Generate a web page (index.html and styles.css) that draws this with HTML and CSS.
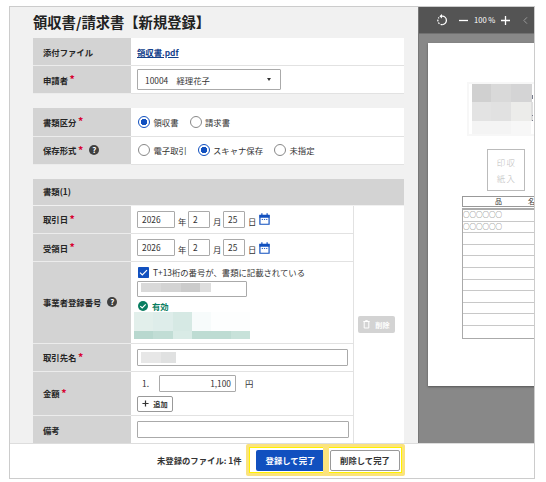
FILE: index.html
```html
<!DOCTYPE html>
<html lang="ja">
<head>
<meta charset="utf-8">
<title>領収書/請求書【新規登録】</title>
<link rel="stylesheet" href="styles.css">
</head>
<body>
<div class="window">
  <div class="main">
    <div class="form">
      <h1>領収書/請求書【新規登録】</h1>
      <section class="card">
        <div class="row"><div class="label">添付ファイル</div><div class="field"><a class="link">領収書.pdf</a></div></div>
        <div class="row"><div class="label">申請者<i>*</i></div><div class="field"><div class="select"><span>10004　経理花子</span><b class="caret"></b></div></div></div>
      </section>
      <section class="card second">
        <div class="row"><div class="label">書類区分<i>*</i></div><div class="field radios"><span class="radio on"></span><span class="opt kind">領収書</span><span class="radio"></span><span class="opt">請求書</span></div></div>
        <div class="row"><div class="label">保存形式<i>*</i><span class="help">?</span></div><div class="field radios"><span class="radio"></span><span class="opt save">電子取引</span><span class="radio on"></span><span class="opt scan">スキャナ保存</span><span class="radio"></span><span class="opt">未指定</span></div></div>
      </section>
      <section class="docs">
        <div class="head">書類(1)</div>
        <div class="docbody">
          <div class="rows">
            <div class="row"><div class="label">取引日<i>*</i></div><div class="field date"><span class="box year">2026</span><em>年</em><span class="box num">2</span><em>月</em><span class="box num">25</span><em>日</em><svg class="cal" viewBox="0 0 12 13"><path d="M1 2.5h10v9.7H1z" fill="none" stroke="#1150bf" stroke-width="1.3"/><path d="M.5 2h11v3H.5zM2.5.3h1.3V3H2.5zM8.2.3h1.3V3H8.2z" fill="#1150bf"/><path d="M3 7h1.3M5.4 7h1.3M7.8 7h1.3" stroke="#1150bf"/></svg></div></div>
            <div class="row"><div class="label">受領日<i>*</i></div><div class="field date"><span class="box year">2026</span><em>年</em><span class="box num">2</span><em>月</em><span class="box num">25</span><em>日</em><svg class="cal" viewBox="0 0 12 13"><path d="M1 2.5h10v9.7H1z" fill="none" stroke="#1150bf" stroke-width="1.3"/><path d="M.5 2h11v3H.5zM2.5.3h1.3V3H2.5zM8.2.3h1.3V3H8.2z" fill="#1150bf"/><path d="M3 7h1.3M5.4 7h1.3M7.8 7h1.3" stroke="#1150bf"/></svg></div></div>
            <div class="row reg"><div class="label">事業者登録番号<span class="help">?</span></div><div class="field stack">
              <div class="check"><svg viewBox="0 0 11 11"><rect width="11" height="11" rx=".8" fill="#1150bf"/><path d="M2 5.6l2.3 2.3L9 3.2" fill="none" stroke="#fff" stroke-width="1.2"/></svg>T+13桁の番号が、書類に記載されている</div>
              <div class="box regno"><svg class="mask" viewBox="0 0 70 9"><path fill="#d9d9d9" d="M0 0h70v9H0z"/><path fill="#d3d3d3" d="M20 0h20v9H20z"/><path fill="#cbcbcb" d="M40 0h19v9H40z"/><path fill="#dedede" d="M59 0h11v9H59z"/></svg></div>
              <div class="valid"><svg viewBox="0 0 10 10"><circle cx="5" cy="5" r="5" fill="#087d60"/><path d="M2.3 5.1l1.9 1.9 3.5-3.6" fill="none" stroke="#fff" stroke-width="1.2"/></svg>有効</div>
              <svg class="mosaic" viewBox="0 0 116 27"><path fill="#e2efeb" d="M0 0h19v19H0z"/><path fill="#deedea" d="M19 0h20v19H19z"/><path fill="#d6e9e4" d="M39 0h19v19H39z"/><path fill="#f7fbfb" d="M58 0h19v19H58z"/><path fill="#fdfefe" d="M77 0h39v19H77z"/><path fill="#b8d8cf" d="M0 19h19v8H0z"/><path fill="#c1ddd5" d="M19 19h20v8H19z"/><path fill="#d9ebe6" d="M39 19h19v8H39z"/><path fill="#bedcd3" d="M58 19h39v8H58z"/><path fill="#c8e2da" d="M97 19h19v8H97z"/></svg>
            </div></div>
            <div class="row"><div class="label">取引先名<i>*</i></div><div class="field"><div class="box partner"><svg class="mask" viewBox="0 0 35 11"><path fill="#e7e7e7" d="M0 0h20v11H0z"/><path fill="#e0e1e1" d="M20 0h15v11H20z"/></svg></div></div></div>
            <div class="row money"><div class="label">金額<i>*</i></div><div class="field stack"><div class="amount"><span class="no">1.</span><span class="box value">1,100</span><span>円</span></div><div class="add"><svg viewBox="0 0 8 8"><path d="M4 .5v7M.5 4h7" stroke="#333" stroke-width="1.4"/></svg>追加</div></div></div>
            <div class="row last"><div class="label">備考</div><div class="field"><div class="box note"></div></div></div>
          </div>
          <div class="actions"><div class="delete"><svg viewBox="0 0 7 9"><path d="M1.2 2v6h4.6V2M.3 1.5h6.4M2.3.6h2.4" fill="none" stroke="#fff"/></svg>削除</div></div>
        </div>
      </section>
    </div>
    <div class="viewer">
      <div class="toolbar">
        <svg class="rotate" viewBox="0 0 12 12"><g fill="none" stroke="#fff" stroke-width="1.3"><path d="M5 2.2h1.2a4.2 4.2 0 0 1 0 8.4"/><path d="M6.2 10.6A4.2 4.2 0 0 1 3 3.5" stroke-dasharray="1.6 1.3"/></g><path d="M6 .0v4.6L3.4 2.3z" fill="#fff"/></svg>
        <svg class="minus" viewBox="0 0 9 9"><path d="M0 4.5h9" stroke="#fff" stroke-width="1.3"/></svg>
        <span class="zoom">100 %</span>
        <svg class="plus" viewBox="0 0 9 9"><path d="M0 4.5h9M4.5 0v9" stroke="#fff" stroke-width="1.3"/></svg>
        <svg class="prev" viewBox="0 0 5 7"><path d="M4 .3L.9 3.5 4 6.7" fill="none" stroke="#999"/></svg>
      </div>
      <div class="paper">
        <svg class="hidden-info" viewBox="0 0 67 54"><path fill="#f7f7f7" d="M0 0h67v54H0z"/><path fill="#fff" d="M2 2h65v50H2z"/><path fill="#d0d0d0" d="M5 2h19v18H5z"/><path fill="#d9d9d9" d="M24 2h20v18H24z"/><path fill="#d4d4d5" d="M44 2h21v18H44z"/><path fill="#e3e3e3" d="M5 20h19v19H5z"/><path fill="#e1e1e1" d="M24 20h20v19H24z"/><path fill="#ececea" d="M44 20h20v19H44z"/><path fill="#dedede" d="M64 20h2v19h-2z"/><path fill="#f4f4f4" d="M5 39h39v13H5z"/><path fill="#f7f7f7" d="M44 39h20v13H44z"/><path fill="#777b8b" d="M65 13h1v4h-1zM65 33h1v1h-1zM65 38h1v1h-1z"/></svg>
        <div class="stamp"><span>印収</span><span>紙入</span></div>
        <div class="thead"><span>品</span><span>名</span></div>
        <div class="tbody"><div>○○○○○○</div><div>○○○○○○</div><div></div><div></div><div></div><div></div><div></div><div></div><div></div><div></div><div></div></div>
      </div>
    </div>
  </div>
  <footer>
    <span class="count">未登録のファイル: 1件</span>
    <div class="marked"><div class="mark first"><div class="submit">登録して完了</div></div><div class="mark"><div class="remove">削除して完了</div></div></div>
  </footer>
</div>
</body>
</html>
```

FILE: styles.css
```css
* { box-sizing: border-box; }
body { margin: 0; width: 546px; height: 482px; padding: 6px 0 0 9px; background: #fff; color: #333; font: 8.35px/12px "Noto Sans CJK JP", "Noto Sans", sans-serif; white-space: nowrap; overflow: hidden; }
svg { display: block; flex: none; }
.window { width: 526px; height: 473px; border: 1px solid #ccc; display: flex; flex-direction: column; }
.main { height: 436px; display: flex; }
.form { width: 408px; padding: 0 0 0 23px; background: #f1f1f1; }
h1 { margin: 0; height: 31px; font-size: 14.3px; line-height: 30px; font-weight: 700; color: #222; }
.card, .docs { width: 371px; }
.second { margin: 14px 0; }
.row { height: 28.2px; display: flex; border-bottom: 1px solid #e2e2e2; background: #fff; }
.label { width: 98px; margin-right: 1px; padding-left: 10px; background: #d3d3d3; box-shadow: 0 1px #ececec; display: flex; align-items: center; font-weight: 700; color: #252525; }
.label i { font-style: normal; color: #d8002f; margin: -1px 0 0 1.5px; font-size: 10.5px; }
.help { width: 10px; height: 10px; margin-left: 6px; border-radius: 50%; background: #404040; color: #fff; font-size: 8px; line-height: 10px; text-align: center; }
.field { flex: 1; padding-left: 5px; display: flex; align-items: center; }
.link { color: #14418b; font-weight: 700; text-decoration: underline; }
.select { width: 144px; height: 21px; border: 1px solid #aaa; border-radius: 1px; padding: 0 9px 0 7px; display: flex; align-items: center; justify-content: space-between; }
.caret { border: 2.5px solid transparent; border-top: 3px solid #333; border-bottom: 0; }
.radios { padding-left: 6px; }
.radio { width: 12px; height: 12px; border: 1px solid #888; border-radius: 50%; flex: none; }
.radio.on { border: 1.3px solid #1150bf; background: radial-gradient(circle, #1150bf 2.9px, #fff 3.5px); }
.opt { margin-left: 3.5px; }
.kind { width: 36px; }
.save { width: 44px; }
.scan { width: 61px; }
.head { height: 26px; margin-bottom: 1px; padding-left: 10px; line-height: 25px; font-weight: 700; background: #d3d3d3; color: #252525; }
.docbody { display: flex; background: #fff; }
.rows { width: 320px; }
.actions { flex: 1; border-left: 1px solid #e2e2e2; display: flex; align-items: center; padding-left: 4px; }
.delete { width: 37px; height: 17px; border-radius: 2px; background: #d3d3d3; color: #fff; display: flex; align-items: center; justify-content: center; font-size: 7.2px; font-weight: 700; gap: 5px; }
.delete svg { width: 7px; height: 9px; }
.box { height: 17px; border: 1px solid #aaa; border-radius: 1px; background: #fff; display: flex; align-items: center; padding: 0 4px; }
.date .box { padding-bottom: 1px; }
.year { width: 38px; }
.num { width: 22px; }
.date em { font-style: normal; width: 8px; margin: 3px 2px 0 3px; }
.cal { width: 11px; height: 12px; margin-left: 1px; }
.reg { height: 81.6px; }
.stack { display: block; }
.check { display: flex; align-items: center; gap: 4px; height: 12px; margin: 4px 0 3px 1px; }
.check svg { width: 11px; height: 11px; }
.regno { width: 110px; height: 16px; padding: 0 0 3px 3px; }
.regno .mask { width: 70px; height: 9px; }
.valid { display: flex; align-items: center; gap: 4px; height: 12px; margin: 2.5px 0 0 1px; font-weight: 700; color: #087d60; }
.valid svg { width: 10px; height: 10px; }
.mosaic { width: 116px; height: 27px; margin-left: -3px; }
.partner { width: 211px; padding-left: 3px; }
.partner .mask { width: 35px; height: 11px; }
.money { height: 44px; }
.amount { display: flex; align-items: center; margin: 3px 0 4px; }
.no { width: 22px; padding-left: 5px; }
.value { width: 77px; margin-right: 9px; justify-content: flex-end; }
.add { width: 36px; height: 16px; border: 1px solid #999; border-radius: 2px; display: flex; align-items: center; justify-content: center; gap: 4px; font-size: 7.2px; font-weight: 700; }
.add svg { width: 7px; height: 7px; }
.last { height: 27.8px; border-bottom: 0; }
.note { width: 212px; }
.viewer { flex: 1; min-width: 0; background: #888; overflow: hidden; border-left: 1px solid #777; }
.toolbar { height: 27px; background: #545454; border-bottom: 1px solid #707070; color: #fff; display: flex; align-items: center; }
.rotate { width: 12px; height: 12px; margin-left: 17px; }
.minus { width: 9px; height: 9px; margin-left: 11px; }
.zoom { width: 21px; margin: 0 6px; font-size: 7.6px; }
.plus { width: 9px; height: 9px; }
.prev { width: 5px; height: 7px; margin-left: 13px; }
.paper { width: 110px; height: 343px; margin: 9px 0 0 9px; padding: 39px 0 0 34px; background: #fff; box-shadow: 0 1px 2px #555; }
.hidden-info { width: 67px; height: 54px; margin-left: 5px; }
.stamp { width: 38px; height: 42px; margin: 13px 0 5px 25px; border: 1.5px solid #bbb; display: flex; flex-direction: column; align-items: center; gap: 4px; padding: 6px 0 0 1px; color: #bbb; font: 300 8.5px/12px "Noto Sans CJK JP", sans-serif; letter-spacing: 1.2px; }
.thead { width: 80px; height: 11px; border: 1px solid #999; padding-left: 32px; font-size: 7px; line-height: 8px; display: flex; gap: 26px; }
.tbody { width: 80px; margin-top: 1px; border: 1px solid #aaa; border-top-width: 2px; }
.tbody div { height: 11.6px; border-bottom: 1px solid #c8c8c8; font-size: 6.5px; line-height: 9px; color: #555; }
.tbody div:last-child { border: 0; }
footer { height: 35px; border-top: 1px solid #ddd; background: #fff; display: flex; }
.count { width: 89px; margin-left: 147px; line-height: 33px; font-weight: 600; }
.marked { display: flex; width: 159px; height: 32px; margin-top: 0; background: #fbe37d; border-radius: 2px; padding: 3px; }
.mark { height: 26px; border: 1px solid #fff100; background: #fff; flex: 1; padding: 2px 0 0 1px; }
.mark.first { flex: none; width: 74px; border-right: 0; margin-right: 6px; padding-left: 6px; }
.mark:last-child { border-left: 0; }
.submit, .remove { height: 21px; line-height: 20px; text-align: center; font-weight: 700; border-radius: 2px; }
.submit { background: #1150bf; color: #fff; border-radius: 2px 0 0 2px; padding-left: 2px; }
.remove { width: 70px; border: 1px solid #999; line-height: 18px; }
```
